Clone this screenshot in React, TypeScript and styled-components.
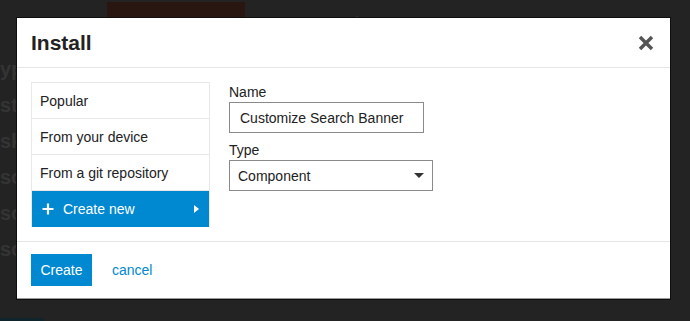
import React from 'react';
import styled, { createGlobalStyle } from 'styled-components';

const GlobalStyle = createGlobalStyle`
  html, body {
    margin: 0;
    padding: 0;
    background: #222222;
    font-family: "Liberation Sans", Arial, Helvetica, sans-serif;
  }
  * { box-sizing: border-box; }
`;

const navItems = ['Popular', 'From your device', 'From a git repository'];
const pageRows = ['yp', 'st', 'sk', 'sc', 'sc', 'sc'];

export default function App() {
  return (
    <>
      <GlobalStyle />
      <Page>
        <PageTop>
          <Banner />
          <PageTitle>Top Sections</PageTitle>
        </PageTop>
        <PageRows>
          {pageRows.map((r, i) => (
            <PageRow key={i}>{r}</PageRow>
          ))}
        </PageRows>
        <PageFoot />

        <Modal>
          <Header>
            <Title>Install</Title>
            <Close aria-label="close">
              <svg width="16" height="16" viewBox="0 0 16 16">
                <path d="M2 2 L14 14 M14 2 L2 14" stroke="#555" strokeWidth="3.4" strokeLinecap="butt" />
              </svg>
            </Close>
          </Header>
          <Body>
            <Nav>
              {navItems.map((n) => (
                <NavItem key={n}>{n}</NavItem>
              ))}
              <NavItem $active>
                <svg width="12" height="12" viewBox="0 0 12 12">
                  <path d="M6 0.5 V11.5 M0.5 6 H11.5" stroke="#fff" strokeWidth="2.2" />
                </svg>
                <NavLabel>Create new</NavLabel>
                <svg width="5" height="8" viewBox="0 0 5 8">
                  <path d="M0 0 L5 4 L0 8 Z" fill="#fff" />
                </svg>
              </NavItem>
            </Nav>
            <Form>
              <Field>
                <Label>Name</Label>
                <TextInput defaultValue="Customize Search Banner" />
              </Field>
              <Field>
                <Label>Type</Label>
                <Select>
                  <span>Component</span>
                  <svg width="10" height="5" viewBox="0 0 10 5">
                    <path d="M0 0 H10 L5 5 Z" fill="#333" />
                  </svg>
                </Select>
              </Field>
            </Form>
          </Body>
          <Footer>
            <PrimaryButton>Create</PrimaryButton>
            <LinkButton>cancel</LinkButton>
          </Footer>
        </Modal>
      </Page>
    </>
  );
}

const Page = styled.div`
  position: relative;
  width: 690px;
  height: 321px;
  overflow: hidden;
  background: #232323;
  display: flex;
  flex-direction: column;
`;

const PageTop = styled.div`
  display: flex;
  align-items: flex-start;
  gap: 26px;
  padding: 2px 0 0 107px;
  height: 40px;
`;

const Banner = styled.div`
  width: 138px;
  height: 16px;
  background: #2a1610;
`;

const PageTitle = styled.div`
  margin-top: 11px;
  font-size: 20px;
  font-weight: bold;
  color: #2e2e2e;
`;

const PageRows = styled.div`
  display: flex;
  flex-direction: column;
  gap: 14px;
  padding: 18px 0 0 0;
`;

const PageRow = styled.div`
  font-size: 20px;
  font-weight: bold;
  color: #343434;
  line-height: 22px;
`;

const PageFoot = styled.div`
  margin-top: auto;
  width: 44px;
  height: 3px;
  background: #10242c;
`;

const Modal = styled.div`
  position: absolute;
  left: 16px;
  top: 17px;
  width: 655px;
  height: 283px;
  background: #fff;
  border: 1px solid #0e0e0e;
  box-shadow: inset 0 -1px 0 #9a9a9a;
  display: flex;
  flex-direction: column;
`;

const Header = styled.div`
  height: 50px;
  display: flex;
  align-items: center;
  justify-content: space-between;
  padding: 0 16px 0 14px;
  border-bottom: 1px solid #e6e6e6;
`;

const Title = styled.h2`
  margin: 0;
  font-size: 21px;
  font-weight: bold;
  color: #222;
`;

const Close = styled.button`
  background: none;
  border: 0;
  padding: 0;
  display: flex;
  cursor: pointer;
`;

const Body = styled.div`
  height: 174px;
  display: flex;
  gap: 19px;
  padding: 14px 14px 0;
  border-bottom: 1px solid #e6e6e6;
`;

const Nav = styled.div`
  width: 179px;
  align-self: flex-start;
  display: flex;
  flex-direction: column;
  border: 1px solid #e8e8e8;
  border-bottom: 0;
`;

const NavItem = styled.div<{ $active?: boolean }>`
  height: 36px;
  display: flex;
  align-items: center;
  gap: 9px;
  font-size: 14px;
  color: ${({ $active }) => ($active ? '#fff' : '#222')};
  background: ${({ $active }) => ($active ? '#0088d1' : '#fff')};
  border-bottom: 1px solid ${({ $active }) => ($active ? '#0088d1' : '#e8e8e8')};
  padding-left: ${({ $active }) => ($active ? '10px' : '8px')};
  padding-right: 10px;
`;

const NavLabel = styled.span`
  flex: 1;
`;

const Form = styled.div`
  display: flex;
  flex-direction: column;
  gap: 9px;
  padding-top: 2px;
`;

const Field = styled.div`
  display: flex;
  flex-direction: column;
  gap: 2px;
`;

const Label = styled.label`
  font-size: 14px;
  color: #222;
  line-height: 16px;
`;

const TextInput = styled.input`
  width: 195px;
  height: 31px;
  border: 1px solid #8a8a8a;
  padding: 0 10px;
  font-family: inherit;
  font-size: 14px;
  color: #222;
  outline: none;
`;

const Select = styled.div`
  width: 204px;
  height: 31px;
  border: 1px solid #8a8a8a;
  display: flex;
  align-items: center;
  justify-content: space-between;
  padding: 0 8px 0 8px;
  font-size: 14px;
  color: #222;
`;

const Footer = styled.div`
  flex: 1;
  display: flex;
  align-items: center;
  gap: 20px;
  padding: 0 14px 2px;
`;

const PrimaryButton = styled.button`
  height: 32px;
  width: 61px;
  border: 0;
  background: #0088d1;
  color: #fff;
  font-family: inherit;
  font-size: 14px;
`;

const LinkButton = styled.a`
  color: #0088d1;
  font-size: 14px;
`;
